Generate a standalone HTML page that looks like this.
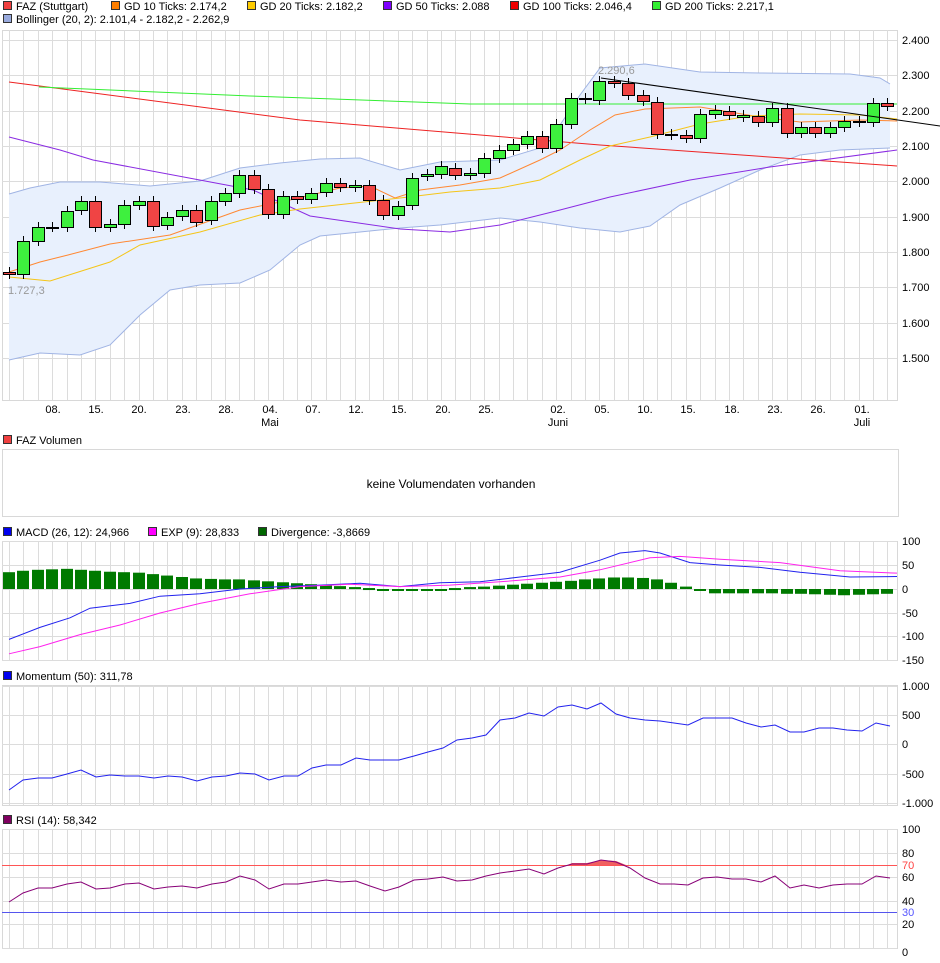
<!DOCTYPE html>
<html><head><meta charset="utf-8"><style>
body{margin:0;background:#fff;width:940px;height:958px;overflow:hidden;font-family:"Liberation Sans",sans-serif;}
svg text{font-family:"Liberation Sans",sans-serif;font-size:11px;fill:#000;}
</style></head><body>
<svg id="s" width="940" height="958" xmlns="http://www.w3.org/2000/svg"></svg>
<script>
const S=document.getElementById('s');let h='';
const X=i=>9+14.4*i, L=2, R=897;
function leg(x,y,c,t){h+=`<rect x="${x+0.5}" y="${y-8.5}" width="8" height="8" fill="${c}" stroke="#333" stroke-width="1"/><text x="${x+13}" y="${y}">${t}</text>`;}
function pl(pts,c,w){h+=`<polyline fill="none" stroke="${c}" stroke-width="${w||1}" points="${pts.map(p=>p.join(',')).join(' ')}"/>`;}
function grid(y0,y1,hs){h+=`<rect x="${L+0.5}" y="${y0+0.5}" width="${R-L}" height="${y1-y0}" fill="#fff" stroke="#d8d8d8"/>`;
 for(let i=0;i<62;i++){const x=Math.round(X(i))+0.5;h+=`<line x1="${x}" y1="${y0}" x2="${x}" y2="${y1}" stroke="#dcdcdc"/>`;}
 hs.forEach(y=>h+=`<line x1="${L}" y1="${y+0.5}" x2="${R}" y2="${y+0.5}" stroke="#dcdcdc"/>`);}
leg(3,10,'#f04040','FAZ (Stuttgart)');leg(111,10,'#ff7f00','GD 10 Ticks: 2.174,2');leg(247,10,'#ffcc00','GD 20 Ticks: 2.182,2');
leg(383,10,'#7f00ff','GD 50 Ticks: 2.088');leg(510,10,'#ee0000','GD 100 Ticks: 2.046,4');leg(652,10,'#33ee33','GD 200 Ticks: 2.217,1');
leg(3,23,'#99aadd','Bollinger (20, 2): 2.101,4 - 2.182,2 - 2.262,9');
const py=[40,75,111,146,181,217,252,287,323,358],pl_=['2.400','2.300','2.200','2.100','2.000','1.900','1.800','1.700','1.600','1.500'];
grid(30,400,py);
py.forEach((y,i)=>h+=`<text x="902" y="${y+4}">${pl_[i]}</text>`);
const up=[[9,194],[30,188],[60,182],[100,182],[150,186],[200,181],[240,168],[280,163],[320,159],[360,158],[400,170],[440,162],[500,160],[540,148],[560,125],[580,95],[600,68],[645,64],[700,72],[760,73],[850,74],[880,78],[890,84]];
const lo=[[9,360],[40,353],[80,355],[110,345],[140,315],[170,290],[200,285],[240,283],[270,270],[300,245],[320,236],[360,232],[400,228],[440,225],[500,218],[540,222],[580,228],[620,232],[650,226],[680,205],[720,188],[760,170],[800,155],[840,150],[890,148]];
h+=`<polygon fill="#e8f0fd" points="${up.concat(lo.slice().reverse()).map(p=>p.join(',')).join(' ')}"/>`;
pl(up,'#a0b4e4');pl(lo,'#a0b4e4');
pl([[9,82],[300,120],[600,145],[897,166]],'#ee2222');
pl([[39,87],[250,96],[470,104],[897,104]],'#33ee33');
pl([[9,137],[60,150],[93,160],[253,190],[310,216],[400,229],[450,232],[500,225],[560,210],[610,197],[690,180],[770,167],[897,150]],'#8a2be2');
pl([[9,272],[40,262],[68,255],[110,244],[170,235],[240,210],[290,200],[340,188],[370,186],[395,198],[420,190],[460,185],[500,178],[540,160],[560,150],[590,130],[615,115],[645,109],[700,107],[760,117],[800,122],[860,120],[897,121]],'#ff8833');
pl([[9,277],[50,281],[110,262],[140,245],[200,232],[260,215],[300,209],[400,198],[450,192],[500,188],[540,180],[580,160],[610,146],[650,137],[700,124],[750,116],[800,114],[860,115],[897,119]],'#f5c518');
const C=[[272,274,1],[274,241,0],[241,227,0],[227,227,0],[227,211,0],[210,201,0],[201,227,1],[227,224,0],[224,205,0],[205,201,0],[201,226,1],[225,217,0],[216,210,0],[210,222,1],[220,201,0],[201,193,0],[193,175,0],[175,189,1],[189,214,1],[214,196,0],[196,199,1],[199,193,0],[192,183,0],[183,187,1],[187,185,0],[185,200,1],[200,215,1],[215,206,0],[205,178,0],[176,174,0],[174,166,0],[168,175,1],[175,173,0],[173,158,0],[158,150,0],[150,144,0],[144,136,0],[136,148,1],[148,124,0],[124,98,0],[99,98,0],[100,81,0],[81,83,1],[83,95,1],[95,101,1],[102,134,1],[134,135,0],[135,138,1],[138,114,0],[114,110,0],[111,115,1],[115,117,0],[116,122,1],[122,108,0],[108,133,1],[133,127,0],[127,133,1],[133,127,0],[127,121,0],[121,122,0],[122,103,0],[103,106,1]];
C.forEach((c,i)=>{const x=Math.round(X(i));const t=Math.min(c[0],c[1]),b=Math.max(c[0],c[1]);
 h+=`<line x1="${x+0.5}" y1="${t-5}" x2="${x+0.5}" y2="${b+5}" stroke="#000"/>`;
 h+=`<rect x="${x-6+0.5}" y="${t+0.5}" width="12" height="${Math.max(b-t,1)}" fill="${c[2]?'#f04444':'#3ef03e'}" stroke="#000"/>`;});
pl([[601,78],[940,126]],'#000');
h+=`<text x="598" y="74" style="fill:#999">2.290,6</text><text x="8" y="294" style="fill:#999">1.727,3</text>`;
[['08.',53],['15.',96],['20.',139],['23.',183],['28.',226],['04.',270],['07.',313],['12.',356],['15.',399],['20.',443],['25.',486],['02.',558],['05.',602],['10.',645],['15.',688],['18.',732],['23.',775],['26.',818],['01.',862]].forEach(d=>h+=`<text x="${d[1]}" y="413" text-anchor="middle">${d[0]}</text>`);
[['Mai',270],['Juni',558],['Juli',862]].forEach(d=>h+=`<text x="${d[1]}" y="426" text-anchor="middle">${d[0]}</text>`);
leg(3,444,'#f04040','FAZ Volumen');
h+=`<rect x="2.5" y="449.5" width="896" height="67" fill="#fff" stroke="#d8d8d8"/><text x="451" y="488" text-anchor="middle" style="font-size:12px">keine Volumendaten vorhanden</text>`;
leg(3,536,'#0000ee','MACD (26, 12): 24,966');leg(148,536,'#ff00ff','EXP (9): 28,833');leg(258,536,'#006600','Divergence: -3,8669');
const my=[541,565,589,613,636,660];grid(541,660,my);['100','50','0','-50','-100','-150'].forEach((t,i)=>h+=`<text x="902" y="${my[i]+4}">${t}</text>`);
const hv=[35,38,40,41,42,40,38,36,35,34,31,28,25,22,21,20,20,18,16,14,12,10,8,6,4,2,-1,-2,-2,-1,0,2,4,5,7,9,11,13,15,17,20,22,24,24,23,20,13,5,-4,-9,-9,-9,-9,-9,-10,-10,-11,-12,-13,-12,-11,-10,-8,-3];
hv.slice(0,62).forEach((v,i)=>{const x=Math.round(X(i));const hh=v*0.48;h+=`<rect x="${x-6}" y="${hh>0?589-hh:589}" width="12" height="${Math.max(Math.abs(hh),2)}" fill="#007a00"/>`;});
const my_=v=>589-v*0.48;
pl([[9,-105],[40,-80],[70,-60],[90,-40],[130,-30],[160,-15],[200,-10],[240,0],[280,5],[320,8],[360,12],[400,5],[440,13],[480,15],[520,25],[560,35],[600,60],[620,75],[645,80],[660,75],[690,55],[720,50],[760,45],[800,35],[850,25],[897,26]].map(p=>[p[0],my_(p[1])]),'#2222ee');
pl([[9,-135],[40,-120],[80,-95],[120,-75],[160,-50],[200,-30],[250,-10],[300,5],[350,10],[400,5],[450,8],[500,15],[560,25],[600,40],[650,65],[680,68],[720,62],[780,55],[840,38],[897,33]].map(p=>[p[0],my_(p[1])]),'#ff22ee');
leg(3,680,'#0000ee','Momentum (50): 311,78');
const mo=[686,715,744,774,803];grid(685,805,mo);['1.000','500','0','-500','-1.000'].forEach((t,i)=>h+=`<text x="902" y="${mo[i]+4}">${t}</text>`);
pl([[9,790],[23,780],[38,778],[52,778],[67,774],[81,770],[96,777],[110,775],[125,776],[139,776],[154,778],[168,776],[182,777],[197,781],[212,777],[226,776],[240,773],[255,774],[269,780],[284,776],[298,776],[312,768],[326,765],[341,765],[356,758],[370,760],[385,760],[399,760],[414,756],[428,752],[443,748],[457,740],[472,738],[486,735],[500,720],[515,718],[529,713],[544,716],[558,707],[572,705],[587,709],[601,703],[616,714],[630,718],[645,720],[660,721],[674,723],[688,725],[703,718],[717,718],[732,718],[746,723],[761,727],[775,725],[790,732],[804,732],[819,728],[833,728],[847,730],[862,731],[876,723],[890,726]],'#2222ee');
leg(3,824,'#800060','RSI (14): 58,342');
const ry=[829,853,877,901,924,948];grid(829,948,ry);
h+=`<text x="902" y="833">100</text><text x="902" y="857">80</text><text x="902" y="869" style="fill:#f44">70</text><text x="902" y="881">60</text><text x="902" y="905">40</text><text x="902" y="916" style="fill:#55f">30</text><text x="902" y="928">20</text><text x="902" y="956">0</text>`;
h+=`<polygon fill="#f06060" points="568,865 572,863 587,863 601,860 616,861 626,865"/>`;
h+=`<line x1="2" y1="865.5" x2="897" y2="865.5" stroke="#f55"/><line x1="2" y1="912.5" x2="897" y2="912.5" stroke="#55e"/>`;
pl([[9,902],[23,893],[38,888],[52,888],[67,884],[81,882],[96,889],[110,888],[125,884],[139,883],[154,889],[168,887],[182,886],[197,888],[212,884],[226,882],[240,876],[255,880],[269,889],[284,884],[298,884],[312,882],[326,880],[341,882],[356,881],[370,886],[385,891],[399,887],[414,880],[428,879],[443,877],[457,881],[472,880],[486,876],[500,873],[515,871],[529,869],[544,874],[558,868],[572,864],[587,864],[601,860],[616,862],[630,868],[645,878],[660,884],[674,884],[688,885],[703,878],[717,877],[732,879],[746,879],[761,882],[775,876],[790,888],[804,885],[819,888],[833,885],[847,884],[862,884],[876,876],[890,878]],'#880077');
S.innerHTML=h;
</script>
</body></html>
